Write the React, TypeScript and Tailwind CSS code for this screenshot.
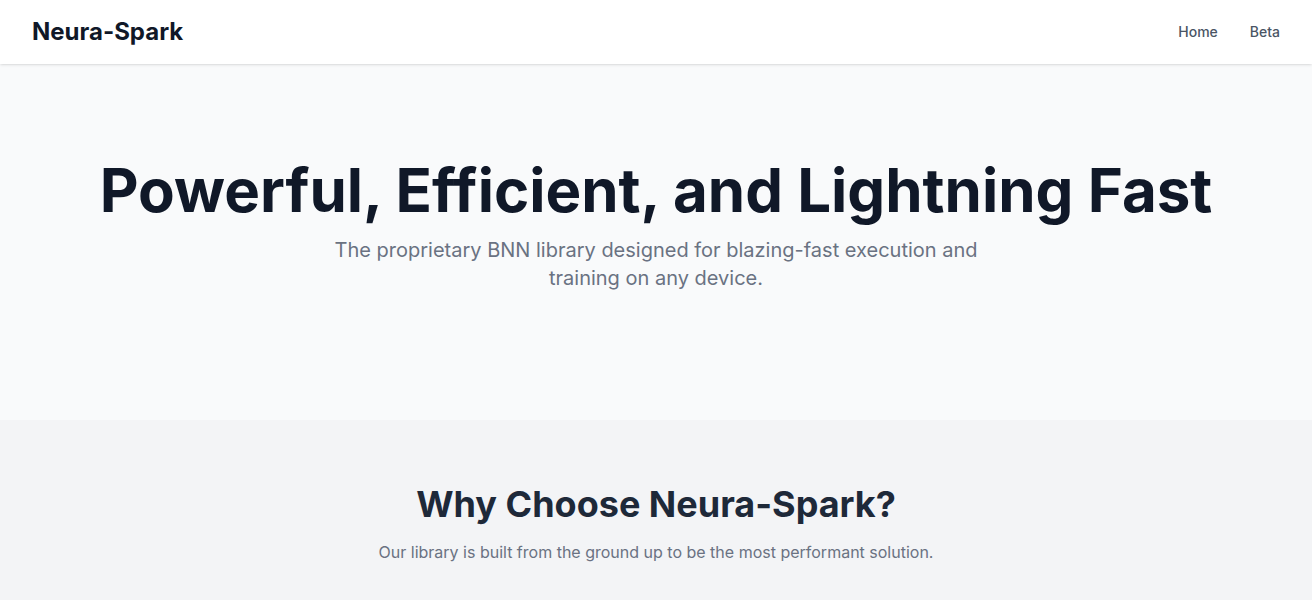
import React from "react";

export default function App() {
  return (
    <div className="min-h-screen bg-gray-100 font-['Inter',sans-serif]">
      {/* Header */}
      <header className="relative z-10 bg-white shadow-sm">
        <div className="flex h-16 items-center justify-between px-8">
          <a href="#" className="text-2xl font-bold text-gray-900">Neura-Spark</a>
          <nav className="flex items-center gap-8 text-sm font-medium text-gray-600">
            <a href="#">Home</a>
            <a href="#">Beta</a>
          </nav>
        </div>
      </header>

      {/* Hero */}
      <section className="bg-gray-50 pt-24 pb-32 text-center">
        <h1 className="text-6xl font-bold leading-none text-gray-900">
          Powerful, Efficient, and Lightning Fast
        </h1>
        <p className="mx-auto mt-4 max-w-2xl text-xl text-gray-500">
          The proprietary BNN library designed for blazing-fast execution and training on any device.
        </p>
      </section>

      {/* Features */}
      <section className="py-16 text-center">
        <h2 className="text-4xl font-bold text-gray-800">Why Choose Neura-Spark?</h2>
        <p className="mt-4 text-base text-gray-500">
          Our library is built from the ground up to be the most performant solution.
        </p>
      </section>
    </div>
  );
}
